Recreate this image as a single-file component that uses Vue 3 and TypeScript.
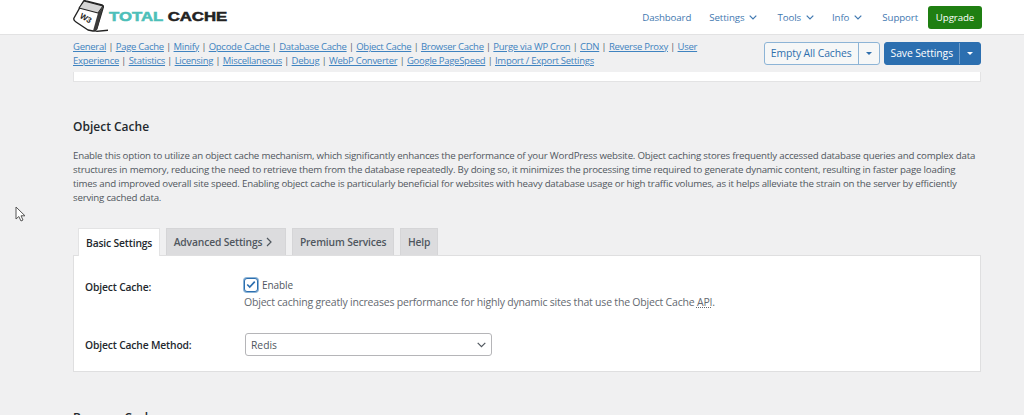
<script setup lang="ts">
const links: string[] = ['General','Page Cache','Minify','Opcode Cache','Database Cache','Object Cache','Browser Cache','Purge via WP Cron','CDN','Reverse Proxy','User Experience','Statistics','Licensing','Miscellaneous','Debug','WebP Converter','Google PageSpeed','Import / Export Settings']
const nav = [{t:'Dashboard',c:false},{t:'Settings',c:true},{t:'Tools',c:true},{t:'Info',c:true},{t:'Support',c:false}]
const tabs = ['Advanced Settings','Premium Services','Help']
</script>

<template>
  <div class="page">
    <header class="top">
      <div class="logo">
        <svg class="cube" width="36" height="34" viewBox="0 0 36 34">
          <path d="M1 18 L10 2 Q11 0 13 1 L29 5 Q31 6 30 8 L24 28 Q23 31 20 31 L15 30 L3 22 Q0 20 1 18 Z" fill="#fff" stroke="#222" stroke-width="1.400" stroke-linejoin="round"/>
          <path d="M11 1 L30 6 L25 13 L6 8 Z" fill="#d5d5d5" stroke="#222" stroke-width="1.100" stroke-linejoin="round"/>
          <path d="M25 13 L30 7 L24 30 L20 31 Z" fill="#3a3a3a"/>
          <path d="M20 31 L35 29.500 L35 31 L24 32 Z" fill="#222"/>
          <g transform="rotate(30 13 18)"><text x="13" y="21" class="w3">W3</text></g>
        </svg>
        <span class="brand"><span class="teal">TOTAL</span> <span class="dark">CACHE</span></span>
      </div>
      <nav class="nav">
        <span v-for="n in nav" :key="n.t" class="nav-item">{{ n.t }}
          <svg v-if="n.c" width="8" height="5" viewBox="0 0 8 5"><path d="M.7.7 4 4 7.3.7" fill="none" stroke="#3f78b0" stroke-width="1.2"/></svg>
        </span>
        <span class="upgrade">Upgrade</span>
      </nav>
    </header>

    <main class="main">
      <div class="options">
        <div class="links">
          <template v-for="(l,i) in links" :key="l">
            <a class="link">{{ l }}</a><span v-if="i < links.length-1" class="sep"> | </span>
          </template>
        </div>
        <div class="actions">
          <div class="split light">
            <span class="b-main">Empty All Caches</span>
            <span class="b-caret"><i class="caret"></i></span>
          </div>
          <div class="split solid">
            <span class="b-main">Save Settings</span>
            <span class="b-caret"><i class="caret"></i></span>
          </div>
        </div>
      </div>
      <div class="strip"></div>

      <h2 class="title">Object Cache</h2>
      <p class="desc">Enable this option to utilize an object cache mechanism, which significantly enhances the performance of your WordPress website. Object caching stores frequently accessed database queries and complex data structures in memory, reducing the need to retrieve them from the database repeatedly. By doing so, it minimizes the processing time required to generate dynamic content, resulting in faster page loading times and improved overall site speed. Enabling object cache is particularly beneficial for websites with heavy database usage or high traffic volumes, as it helps alleviate the strain on the server by efficiently serving cached data.</p>

      <div class="tabs">
        <span class="tab active">Basic Settings</span>
        <span v-for="(t,i) in tabs" :key="t" class="tab" :class="{ wide: i === 0 }">{{ t }}<svg v-if="i===0" class="chev" width="6" height="10" viewBox="0 0 6 10"><path d="M1 1 5 5 1 9" fill="none" stroke="#50575e" stroke-width="1.2"/></svg></span>
      </div>
      <section class="panel">
        <div class="row">
          <div class="label">Object Cache:</div>
          <div class="field">
            <label class="check">
              <span class="box"><svg width="12" height="10" viewBox="0 0 12 10"><path d="M1.5 5 4.5 8 10.5 1.5" fill="none" stroke="#2c6fb0" stroke-width="2"/></svg></span>
              Enable
            </label>
            <div class="hint">Object caching greatly increases performance for highly dynamic sites that use the Object Cache <span class="api">API</span>.</div>
          </div>
        </div>
        <div class="row row2">
          <div class="label">Object Cache Method:</div>
          <div class="select">Redis
            <svg width="9" height="6" viewBox="0 0 9 6"><path d="M.7.8 4.500 4.600 8.300.8" fill="none" stroke="#50575e" stroke-width="1.200"/></svg>
          </div>
        </div>
      </section>
      <h2 class="title next">Browser Cache</h2>
    </main>

    <svg class="cursor" width="11" height="16" viewBox="0 0 11 16"><path d="M1 1 V13 L3.800 10.500 L6 15 L8 14 L6 9.800 H10 Z" fill="#fff" stroke="#555" stroke-width="1"/></svg>
  </div>
</template>

<style>
html, body { margin: 0; background: #f0f0f1; }
</style>

<style scoped>
.page { position: relative; height: 415px; overflow: hidden; background: #f0f0f1; font-family: "Open Sans", "Noto Sans", sans-serif; color: #3c434a; }
.top { height: 34px; background: #fff; border-bottom: 1px solid #e2e2e3; display: flex; justify-content: space-between; align-items: center; padding: 0 42px 0 73px; }
.logo { display: flex; align-items: center; height: 34px; }
.cube { display: block; }
.w3 { font: 700 8px "Liberation Sans", sans-serif; fill: #222; text-anchor: middle; }
.brand { font: 900 12.5px/1 "Liberation Sans", sans-serif; display: inline-block; transform: scaleX(1.34); transform-origin: left center; white-space: nowrap; -webkit-text-stroke: .5px; }
.teal { color: #4dbfb9; }
.dark { color: #222; }
.nav { display: flex; align-items: center; font-size: 9.700px; letter-spacing: -.1px; color: #3f78b0; }
.nav-item { margin-right: 20px; display: inline-flex; align-items: center; gap: 5px; }
.nav-item:nth-child(1), .nav-item:nth-child(3) { margin-right: 18px; }
.nav-item:nth-child(5) { margin-right: 10px; }
.upgrade { background: #1f7f12; color: #fff; border-radius: 3px; height: 23px; width: 54px; display: flex; align-items: center; justify-content: center; }
.main { padding: 0 43px 0 73px; }
.options { display: flex; justify-content: space-between; align-items: flex-start; height: 37px; }
.links { width: 650px; font-size: 9.500px; line-height: 14px; padding-top: 5px; letter-spacing: -.27px; color: #50575e; }
.sep { font-size: 9px; letter-spacing: 0; }
.link { color: #3f83c0; text-decoration: underline; }
.actions { display: flex; gap: 4px; padding-top: 7px; }
.split { display: flex; height: 23px; border-radius: 3px; font-size: 10.400px; line-height: 21px; letter-spacing: -.1px; box-sizing: border-box; }
.light { border: 1px solid #8db4d6; background: #f6f7f7; color: #2f6fad; }
.solid { background: #2c6fb0; color: #fff; border: 1px solid #2c6fb0; }
.b-main { padding: 0 6px; white-space: nowrap; }
.light .b-main { border-right: 1px solid #8db4d6; }
.solid .b-main { border-right: 1px solid #6c9bc9; }
.b-caret { width: 20px; display: flex; align-items: center; justify-content: center; }
.caret { width: 0; height: 0; border-left: 3px solid transparent; border-right: 3px solid transparent; border-top: 3px solid currentColor; }
.strip { height: 9px; background: #fff; border: 1px solid #e3e3e4; border-top: 0; }
.title { font-size: 12px; font-weight: 600; color: #23282d; line-height: 18px; margin: 36px 0 0; }
.desc { margin: 13px 0 0; font-size: 9.700px; line-height: 14px; letter-spacing: -.2px; color: #50575e; }
.tabs { display: flex; gap: 5.500px; margin: 23px 0 0 5px; height: 27px; align-items: flex-end; }
.tab { box-sizing: border-box; height: 27px; background: #dcdcde; border: 1px solid #d5d5d7; border-bottom: 0; padding: 0 7px; font-size: 10.300px; font-weight: 600; letter-spacing: -.15px; color: #50575e; display: flex; align-items: center; }
.tab.wide { padding-right: 13px; }
.tab.active { background: #fff; color: #23282d; border-color: #e3e3e4; position: relative; z-index: 1; margin-bottom: -1px; height: 28px; }
.chev { margin-left: 4px; }
.panel { background: #fff; border: 1px solid #dfdfe0; height: 117px; box-sizing: border-box; padding: 21px 11px 0; }
.row { display: flex; }
.label { width: 160px; font-size: 10.300px; font-weight: 600; letter-spacing: -.15px; color: #23282d; padding-top: 3px; }
.field { margin-left: -1px; }
.check { display: flex; align-items: center; font-size: 10px; letter-spacing: -.1px; gap: 4px; color: #50575e; height: 15px; }
.box { width: 12px; height: 12px; border: 1px solid #2c6fb0; border-radius: 3px; background: #fff; display: flex; align-items: center; justify-content: center; box-shadow: 0 0 0 1px #8db4d6; }
.box svg { width: 10px; height: 9px; }
.hint { font-size: 10.500px; color: #646970; margin-top: 3px; line-height: 15px; letter-spacing: -.2px; }
.api { text-decoration: underline dotted; }
.row2 { margin-top: 23px; align-items: center; }
.row2 .label { padding-top: 0; }
.select { width: 247px; height: 23px; box-sizing: border-box; border: 1px solid #b5b5b8; border-radius: 3px; background: #fff; font-size: 10.300px; color: #50575e; display: flex; align-items: center; justify-content: space-between; padding: 0 5px; }
.next { margin-top: 37px; }
.cursor { position: absolute; left: 15px; top: 206px; }
</style>
